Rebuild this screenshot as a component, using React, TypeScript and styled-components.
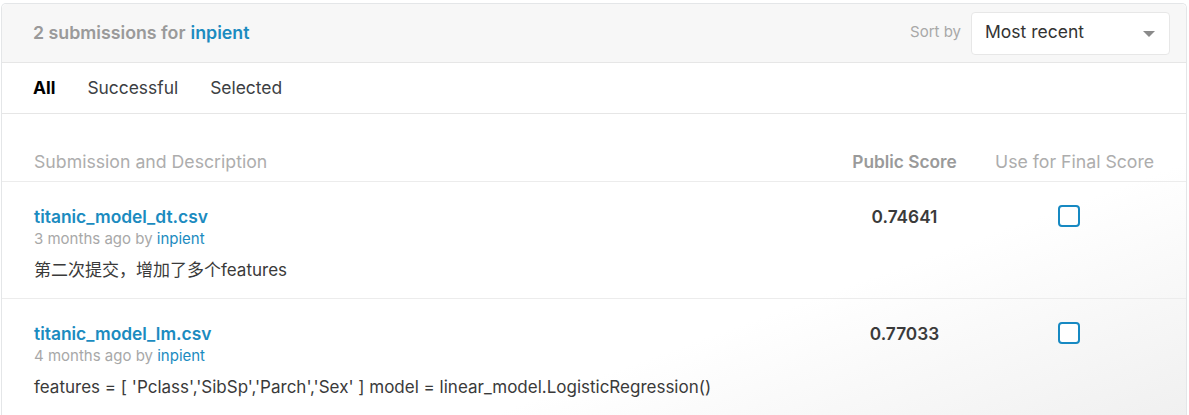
import React from "react";
import styled, { createGlobalStyle } from "styled-components";

const Global = createGlobalStyle`
  html, body { margin: 0; padding: 0; background: #fff; }
  body { font-family: Inter, "Noto Sans CJK SC", sans-serif; -webkit-font-smoothing: antialiased; }
`;

const Panel = styled.div`
  margin: 3px 2px 0 1px;
  border: 1px solid #e4e6e8;
  border-bottom: none;
  border-radius: 5px 5px 0 0;
  height: 411px;
  overflow: hidden;
  background: linear-gradient(160deg, #ffffff 0%, #ffffff 70%, #f0f0f0 100%);
`;

const Header = styled.div`
  height: 58px;
  background: #f7f7f7;
  border-bottom: 1px solid #e6e6e6;
  display: flex;
  align-items: center;
  justify-content: space-between;
  padding: 0 16px 0 31px;
  border-radius: 5px 5px 0 0;
`;

const Title = styled.div`
  font-size: 17.8px;
  font-weight: 600;
  color: #9a9a9a;
  margin-top: -2px;
`;

const Blue = styled.span`
  color: #1b8bc0;
  margin-left: 5px;
`;

const SortWrap = styled.div`
  display: flex;
  align-items: center;
  gap: 10px;
`;

const SortLabel = styled.span`
  font-size: 15px;
  color: #a8a8a8;
  margin-top: -4px;
`;

const Select = styled.div`
  width: 199px;
  height: 43px;
  box-sizing: border-box;
  background: #fff;
  border: 1px solid #e7e7e7;
  border-radius: 4px;
  display: flex;
  align-items: center;
  justify-content: space-between;
  padding: 0 14px 0 13px;
  font-size: 17.5px;
  color: #333;
`;

const SelectText = styled.span`
  margin-top: -4px;
`;

const Arrow = styled.span`
  width: 0;
  height: 0;
  border-left: 6px solid transparent;
  border-right: 6px solid transparent;
  border-top: 6px solid #8a8a8a;
  margin-top: 2px;
`;

const Tabs = styled.div`
  height: 50px;
  border-bottom: 1px solid #e6e6e6;
  display: flex;
  align-items: center;
  gap: 32px;
  padding-left: 31px;
`;

const Tab = styled.span<{ $active?: boolean }>`
  font-size: 17.4px;
  font-weight: ${(p) => (p.$active ? 700 : 400)};
  color: ${(p) => (p.$active ? "#000" : "#3c4043")};
  margin-top: -2px;
`;

const Grid = styled.div`
  display: grid;
  grid-template-columns: 1fr 107px 157px;
  column-gap: 37px;
  padding: 0 34px 0 32px;
`;

const HeadRow = styled(Grid)`
  height: 68px;
  align-items: end;
  padding-bottom: 9px;
  box-sizing: border-box;
  border-bottom: 1px solid #ececec;
`;

const HeadCell = styled.div<{ $bold?: boolean; $center?: boolean }>`
  font-size: ${(p) => (p.$bold ? "17.3px" : "17.7px")};
  font-weight: ${(p) => (p.$bold ? 600 : 400)};
  color: ${(p) => (p.$bold ? "#9a9a9a" : "#adadad")};
  text-align: ${(p) => (p.$center ? "center" : "left")};
  white-space: nowrap;
`;

const Row = styled(Grid)`
  height: 117px;
  box-sizing: border-box;
  padding-top: 24px;
  border-bottom: 1px solid #ececec;
`;

const Info = styled.div`
  display: flex;
  flex-direction: column;
`;

const FileName = styled.a`
  font-size: 17.4px;
  font-weight: 600;
  color: #1b8bc0;
  line-height: 22px;
  text-decoration: none;
`;

const Meta = styled.div`
  font-size: 15px;
  color: #a8a8a8;
  line-height: 20px;
  margin-top: 1px;
`;

const MetaLink = styled.span`
  color: #1b8bc0;
`;

const Desc = styled.div`
  font-size: 17px;
  color: #3a3a3a;
  line-height: 22px;
  margin-top: 10px;
  white-space: nowrap;
`;

const Score = styled.div`
  font-size: 17.3px;
  font-weight: 600;
  color: #3a3a3a;
  text-align: center;
  line-height: 22px;
`;

const CheckCell = styled.div`
  display: flex;
  justify-content: center;
  padding-right: 10px;
  margin-top: -1px;
`;

const Check = styled.span`
  width: 22px;
  height: 22px;
  box-sizing: border-box;
  border: 2px solid #1789c2;
  border-radius: 4px;
  background: #fff;
`;

const rows = [
  {
    name: "titanic_model_dt.csv",
    ago: "3 months ago",
    desc: "第二次提交，增加了多个features",
    score: "0.74641",
  },
  {
    name: "titanic_model_lm.csv",
    ago: "4 months ago",
    desc: "features = [ 'Pclass','SibSp','Parch','Sex' ] model = linear_model.LogisticRegression()",
    score: "0.77033",
  },
];

export default function App() {
  return (
    <>
      <Global />
      <Panel>
        <Header>
          <Title>
            2 submissions for<Blue>inpient</Blue>
          </Title>
          <SortWrap>
            <SortLabel>Sort by</SortLabel>
            <Select>
              <SelectText>Most recent</SelectText>
              <Arrow />
            </Select>
          </SortWrap>
        </Header>
        <Tabs>
          <Tab $active>All</Tab>
          <Tab>Successful</Tab>
          <Tab>Selected</Tab>
        </Tabs>
        <HeadRow>
          <HeadCell>Submission and Description</HeadCell>
          <HeadCell $bold $center>Public Score</HeadCell>
          <HeadCell $center>Use for Final Score</HeadCell>
        </HeadRow>
        {rows.map((r) => (
          <Row key={r.name}>
            <Info>
              <FileName href="#">{r.name}</FileName>
              <Meta>
                {r.ago} by <MetaLink>inpient</MetaLink>
              </Meta>
              <Desc>{r.desc}</Desc>
            </Info>
            <Score>{r.score}</Score>
            <CheckCell>
              <Check />
            </CheckCell>
          </Row>
        ))}
      </Panel>
    </>
  );
}
